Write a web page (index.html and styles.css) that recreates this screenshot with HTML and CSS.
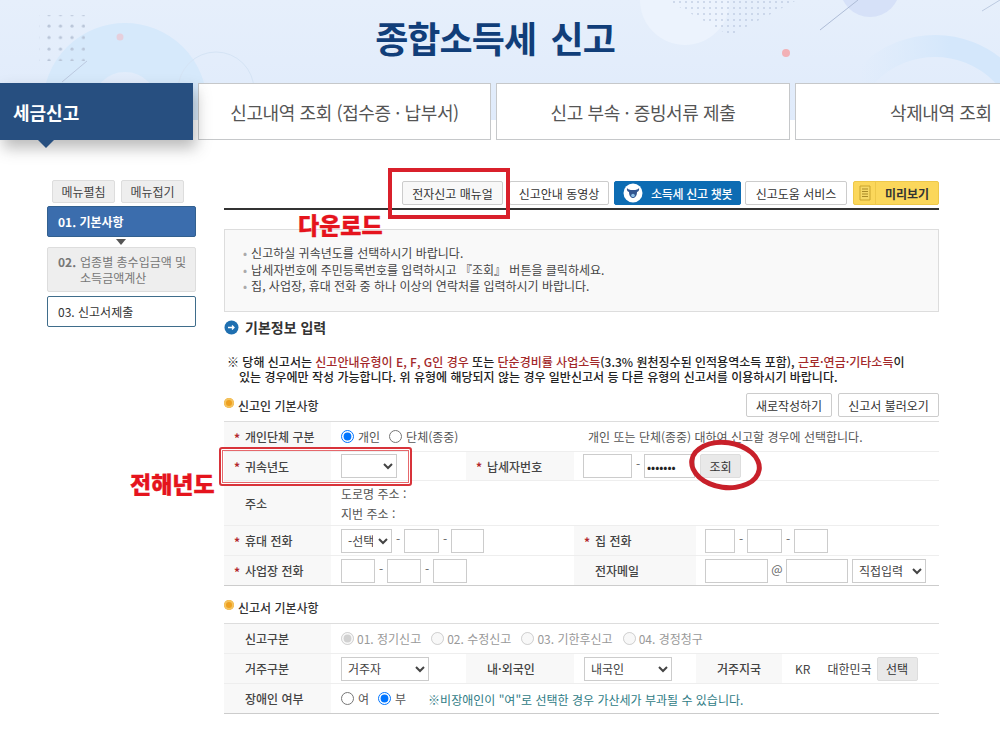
FILE: index.html
```html
<!DOCTYPE html>
<html lang="ko">
<head>
<meta charset="utf-8">
<title>종합소득세 신고</title>
<link rel="stylesheet" href="styles.css">
</head>
<body>
<div class="page">
  <header class="banner">
    <svg class="banner-art" width="1000" height="120" viewBox="0 0 1000 120" aria-hidden="true">
      <defs>
        <pattern id="dots" width="11.5" height="11.5" patternUnits="userSpaceOnUse"><circle cx="3" cy="3" r="1.6" fill="#b9c5d8"/></pattern>
        <pattern id="dots2" width="6" height="6" patternUnits="userSpaceOnUse"><circle cx="2" cy="2" r="0.8" fill="#a9b9d3"/></pattern>
        <linearGradient id="fade" gradientUnits="userSpaceOnUse" x1="860" y1="0" x2="950" y2="0"><stop offset="0" stop-color="#d8e9fb" stop-opacity="0"/><stop offset="1" stop-color="#d4e7fb"/></linearGradient>
      </defs>
      <circle cx="125" cy="105" r="57.500" fill="none" stroke="#d6e9fb" stroke-width="49"/>
      <circle cx="216" cy="90" r="38" fill="none" stroke="#d5e4f5" stroke-width="1"/>
      <rect x="39" y="15" width="46" height="46" fill="url(#dots)"/>
      <circle cx="120" cy="37" r="3.500" fill="#e6cfdc"/>
      <line x1="87" y1="61" x2="62" y2="82" stroke="#bcc9e0"/>
      <circle cx="685" cy="0" r="45" fill="#ecf3fd"/>
      <polygon points="667,0 797,0 735,33 725,33" fill="url(#dots2)"/>
      <circle cx="870" cy="-13" r="30" fill="#d6e1f8"/>
      <line x1="820" y1="30" x2="858" y2="0" stroke="#aebcd6"/>
      <line x1="982" y1="11" x2="1000" y2="0" stroke="#bccae0"/>
      <circle cx="786" cy="53" r="4" fill="#f2b1b6"/>
      <circle cx="935" cy="140" r="94" fill="none" stroke="url(#fade)" stroke-width="22"/>
    </svg>
    <h1 class="banner-title">종합소득세 신고</h1>
  </header>

  <nav class="tabs">
    <a class="tab tab-active">세금신고</a>
    <a class="tab tab-2">신고내역 조회 (접수증 · 납부서)</a>
    <a class="tab tab-3">신고 부속 · 증빙서류 제출</a>
    <a class="tab tab-4">삭제내역 조회</a>
  </nav>

  <div class="main">
    <aside class="side">
      <div class="side-btns">
        <button class="side-btn">메뉴펼침</button>
        <button class="side-btn">메뉴접기</button>
      </div>
      <div class="step step-on">01. 기본사항</div>
      <div class="step-arrow"></div>
      <div class="step step-off"><span class="step-no">02.</span><span>업종별 총수입금액 및<br>소득금액계산</span></div>
      <div class="step step-next">03. 신고서제출</div>
    </aside>

    <section class="content">
      <div class="toolbar">
        <button class="tool t-manual">전자신고 매뉴얼</button>
        <button class="tool t-video">신고안내 동영상</button>
        <button class="tool tool-chat">
          <svg width="20" height="20" viewBox="0 0 20 20" aria-hidden="true"><circle cx="10" cy="10" r="9.500" fill="#fff"/><path d="M4 5c1 1.500 2.500 2 6 2s5-.5 6-2c.5 2.200-.5 3.500-2 4 0 3.500-1.800 6-4 6s-4-2.500-4-6C4.500 8.500 3.500 7.200 4 5z" fill="#31548f"/><circle cx="10" cy="12.500" r="1.800" fill="#8fc1e8"/></svg>
          <span>소득세 신고 챗봇</span>
        </button>
        <button class="tool t-help">신고도움 서비스</button>
        <button class="tool tool-preview">
          <span class="preview-icon"><svg width="12" height="16" viewBox="0 0 12 16" aria-hidden="true"><path d="M1 1h10v14H1z" fill="#f6d867" stroke="#c9a42f"/><path d="M3 4h6M3 6.500h6M3 9h6M3 11.500h6" stroke="#a98a28"/></svg></span>
          <span class="preview-text">미리보기</span>
        </button>
      </div>

      <div class="notice">
        <p>신고하실 귀속년도를 선택하시기 바랍니다.</p>
        <p>납세자번호에 주민등록번호를 입력하시고 『조회』 버튼을 클릭하세요.</p>
        <p>집, 사업장, 휴대 전화 중 하나 이상의 연락처를 입력하시기 바랍니다.</p>
      </div>

      <h2 class="section-title">
        <svg width="15" height="15" viewBox="0 0 15 15" aria-hidden="true"><circle cx="7.500" cy="7.500" r="7" fill="#1f6fb0"/><path d="M4 7.500h6M8 5.500l2 2-2 2" stroke="#fff" stroke-width="1.300" fill="none"/></svg>
        기본정보 입력
      </h2>

      <p class="warn">※ 당해 신고서는 <em>신고안내유형이 E, F, G인 경우</em> 또는 <em>단순경비률 사업소득</em>(3.3% 원천징수된 인적용역소득 포함), <em>근로·연금·기타소득</em>이<br><span class="warn-indent">있는 경우에만 작성 가능합니다. 위 유형에 해당되지 않는 경우 일반신고서 등 다른 유형의 신고서를 이용하시기 바랍니다.</span></p>

      <div class="sub-head">
        <h3 class="sub-title"><i class="bullet"></i>신고인 기본사항</h3>
        <div class="sub-actions">
          <button class="action a-new">새로작성하기</button>
          <button class="action a-load">신고서 불러오기</button>
        </div>
      </div>

      <table class="form">
        <colgroup><col class="c1"><col class="c2"><col class="c3"><col class="c4"><col class="c5"><col class="c6"></colgroup>
        <tr class="r1">
          <th class="req">개인단체 구분</th>
          <td colspan="2"><label class="rad"><input type="radio" name="a" checked>개인</label><label class="rad"><input type="radio" name="a">단체(종중)</label></td>
          <td colspan="3" class="hint">개인 또는 단체(종중) 대하여 신고할 경우에 선택합니다.</td>
        </tr>
        <tr class="r2">
          <th class="req">귀속년도</th>
          <td><select class="sel w56"><option></option></select></td>
          <th class="req">납세자번호</th>
          <td colspan="2" class="tight"><input class="inp w49" type="text"><span class="dash">-</span><input class="inp w51 pw" type="text" value="•••••••"><button class="lookup">조회</button></td>
          <td></td>
        </tr>
        <tr class="r3">
          <th>주소</th>
          <td colspan="5" class="addr">도로명 주소 :<br>지번 주소 :</td>
        </tr>
        <tr class="r4">
          <th class="req">휴대 전화</th>
          <td colspan="2"><select class="sel w51"><option>-선택-</option></select><span class="dash">-</span><input class="inp w35" type="text"><span class="dash">-</span><input class="inp w33" type="text"></td>
          <th class="req">집 전화</th>
          <td colspan="2" class="tight"><input class="inp w30" type="text"><span class="dash">-</span><input class="inp w35" type="text"><span class="dash">-</span><input class="inp w34" type="text"></td>
        </tr>
        <tr class="r5">
          <th class="req">사업장 전화</th>
          <td colspan="2"><input class="inp w34" type="text"><span class="dash">-</span><input class="inp w34" type="text"><span class="dash">-</span><input class="inp w34" type="text"></td>
          <th>전자메일</th>
          <td colspan="2" class="tight"><input class="inp w63" type="text"><span class="at">@</span><input class="inp w62" type="text"><select class="sel w74"><option>직접입력</option></select></td>
        </tr>
      </table>

      <h3 class="sub-title sub-second"><i class="bullet"></i>신고서 기본사항</h3>

      <table class="form form-b">
        <colgroup><col class="c1"><col class="c2"><col class="c3"><col class="c4"><col class="c5"><col class="c6"></colgroup>
        <tr>
          <th>신고구분</th>
          <td colspan="5" class="muted"><label class="rad rad-d"><input type="radio" name="b" checked disabled>01. 정기신고</label><label class="rad rad-d"><input type="radio" name="b" disabled>02. 수정신고</label><label class="rad rad-d"><input type="radio" name="b" disabled>03. 기한후신고</label><label class="rad rad-d"><input type="radio" name="b" disabled>04. 경정청구</label></td>
        </tr>
        <tr>
          <th>거주구분</th>
          <td><select class="sel w88"><option>거주자</option></select></td>
          <th>내·외국인</th>
          <td><select class="sel w88"><option>내국인</option></select></td>
          <th>거주지국</th>
          <td class="country-cell"><div class="country"><span>KR</span><span>대한민국</span><button class="lookup pick">선택</button></div></td>
        </tr>
        <tr>
          <th>장애인 여부</th>
          <td colspan="5"><label class="rad"><input type="radio" name="c">여</label><label class="rad"><input type="radio" name="c" checked>부</label><span class="teal">※비장애인이 "여"로 선택한 경우 가산세가 부과될 수 있습니다.</span></td>
        </tr>
      </table>
    </section>
  </div>

  <div class="mark mark-manual"></div>
  <div class="callout callout-dl">다운로드</div>
  <div class="mark mark-year"></div>
  <div class="callout callout-year">전해년도</div>
  <div class="mark mark-lookup"></div>
</div>
</body>
</html>
```

FILE: styles.css
```css
* { box-sizing: border-box; }
html, body { margin: 0; background: #fff; }
body { font-family: "Noto Sans CJK KR", "Noto Sans", sans-serif; color: #333; font-size: 12px; overflow: hidden; }
.page { position: relative; width: 1000px; height: 730px; overflow: hidden; }
p, h1, h2, h3 { margin: 0; }
button { font-family: inherit; cursor: pointer; }

.banner { position: relative; height: 120px; margin-bottom: -37px; padding-top: 12px; background: linear-gradient(180deg, #e6effb, #e0ebfb); text-align: center; overflow: hidden; }
.banner-art { position: absolute; left: 0; top: 0; }
.banner-title { position: relative; width: 990px; font-size: 36px; line-height: 50px; font-weight: 700; color: #113e79; letter-spacing: -.9px; word-spacing: 5px; }

.tabs { position: relative; display: flex; height: 57px; }
.tab { flex: none; display: flex; align-items: center; justify-content: center; height: 57px; background: #fff; border: 1px solid #c6c8ca; font-size: 18px; letter-spacing: -.4px; color: #555; }
.tab-active { position: relative; width: 193px; margin-right: 5px; justify-content: flex-start; padding-left: 13px; background: #274f80; border: 0; color: #fff; font-weight: 700; letter-spacing: 0; box-shadow: 3px 8px 14px rgba(60, 60, 60, .35); }
.tab-active::after { content: ""; position: absolute; left: 37px; top: 56px; border: 9px solid transparent; border-top-color: #274f80; border-bottom: 0; }
.tab-2 { width: 293px; margin-right: 5px; }
.tab-3 { width: 294px; margin-right: 5px; }
.tab-4 { width: 220px; justify-content: flex-start; padding-left: 94px; }

.main { display: flex; gap: 28px; padding: 41px 0 0 47px; }
.side { width: 149px; flex: none; }
.side-btns { display: flex; gap: 6px; padding-left: 5px; margin: -1px 0 3px; }
.side-btn { width: 63px; height: 23px; padding: 0; background: #eee; border: 1px solid #ddd; border-radius: 2px; font-size: 12px; color: #444; }
.step { display: flex; align-items: center; width: 149px; padding-left: 10px; border-radius: 2px; font-size: 12px; }
.step-on { height: 31px; background: #3b6dad; border: 1px solid #32608f; color: #fff; font-weight: 700; }
.step-arrow { width: 0; margin: 2px 0 2px 69px; border: 5px solid transparent; border-top: 6px solid #555; border-bottom: 0; height: 6px; }
.step-off { gap: 4px; height: 45px; background: #eee; border: 1px solid #ddd; color: #777; line-height: 16px; }
.step-no { align-self: flex-start; padding-top: 6px; font-weight: 700; }
.step-next { height: 31px; margin-top: 4px; background: #fff; border: 1px solid #3f6d8b; color: #333; }

.content { width: 715px; flex: none; }
.toolbar { display: flex; justify-content: flex-end; gap: 5px; height: 29px; padding-bottom: 4px; border-bottom: 2px solid #333; }
.tool { flex: none; height: 24px; padding: 0; background: #fff; border: 1px solid #ccc; border-radius: 2px; font-size: 12px; color: #333; display: flex; align-items: center; justify-content: center; white-space: nowrap; }
.t-manual { width: 101px; background: #f8f8f8; }
.t-video { width: 100px; margin-left: 1px; }
.t-help { width: 102px; margin-right: 1px; }
.tool-chat { width: 127px; gap: 8px; margin-right: -1px; justify-content: flex-start; padding-left: 8px; background: #0d6cb3; border-color: #0d6cb3; color: #fff; font-weight: 500; letter-spacing: -.3px; }
.tool-preview { width: 86px; background: #fbd75b; border-color: #eec84a; font-weight: 700; }
.preview-icon { display: flex; align-items: center; justify-content: center; width: 22px; height: 22px; border-right: 1px solid #eec84a; }
.preview-text { flex: 1; text-align: center; }

.notice { height: 83px; margin-top: 19px; padding: 15px 0 0 18px; background: #f9f9f9; border: 1px solid #ddd; font-size: 12px; line-height: 16.500px; color: #444; }
.notice p::before { content: "•"; color: #aaa; margin-right: 4px; }

.section-title { display: flex; align-items: center; gap: 6px; height: 20px; margin-top: 5px; font-size: 14px; font-weight: 700; color: #333; }
.warn { margin-top: 17px; padding-left: 3px; font-size: 12px; line-height: 15px; font-weight: 500; color: #222; white-space: nowrap; }
.warn em { font-style: normal; color: #a3282a; }
.warn-indent { padding-left: 12px; }

.sub-head { display: flex; align-items: center; justify-content: space-between; height: 24px; margin-top: 9px; }
.sub-title { display: flex; align-items: center; gap: 4px; font-size: 12px; font-weight: 500; color: #333; }
.bullet { width: 10px; height: 10px; border-radius: 50%; background: #eea020; box-shadow: inset 0 0 0 2px #f4c35e; margin-top: -4px; }
.sub-actions { display: flex; gap: 6px; }
.action { height: 24px; padding: 0; background: #fff; border: 1px solid #ccc; border-radius: 2px; font-size: 12px; color: #333; }
.a-new { width: 86px; }
.a-load { width: 101px; }

.form { width: 715px; margin-top: 4px; border-collapse: collapse; table-layout: fixed; border-top: 1px solid #ddd; border-bottom: 1px solid #ccc; }
.c1 { width: 107px; } .c2 { width: 135px; } .c3 { width: 108px; } .c4 { width: 122px; } .c5 { width: 86px; } .c6 { width: 157px; }
.form tr { height: 30px; border-bottom: 1px solid #eee; }
.form tr:last-child { border-bottom: 0; }
.form tr.r2 { height: 29px; }
.form tr.r3 { height: 45px; }
.form th, .form td { padding: 0; font-size: 12px; color: #444; vertical-align: middle; }
.form th { position: relative; background: #f8f8f8; font-weight: 500; text-align: left; padding-left: 21px; }
.form td { padding-left: 10px; white-space: nowrap; }
.form td.tight { padding-left: 9px; }
.req::before { content: "*"; position: absolute; left: 10px; top: 50%; margin-top: -8px; color: #b3272c; font-weight: 700; }
.form td.hint { color: #555; padding-left: 14px; }
.form td.addr { padding-top: 2px; line-height: 20px; color: #555; }
.rad { display: inline-flex; align-items: center; gap: 4px; margin-right: 9px; color: #555; }
.rad input { width: 13px; height: 13px; margin: 0; }
.rad-d { gap: 3px; color: #999; margin-right: 10px; }
.sel, .inp { height: 24px; padding: 0 2px; background: #fff; border: 1px solid #ccc; font-family: inherit; font-size: 12px; color: #444; vertical-align: middle; border-radius: 0; }
.w56 { width: 56px; } .w51 { width: 51px; } .w49 { width: 49px; } .w35 { width: 35px; } .w34 { width: 34px; } .w33 { width: 33px; } .w30 { width: 30px; } .w63 { width: 63px; } .w62 { width: 62px; } .w74 { width: 74px; margin-left: 4px; } .w88 { width: 88px; }
.pw { color: #222; }
.dash { display: inline-block; width: 12px; text-align: center; color: #666; }
.at { display: inline-block; width: 18px; text-align: center; color: #666; }
.lookup { width: 41px; height: 24px; margin-left: 5px; padding: 0; background: #e9e9e9; border: 1px solid #ddd; border-radius: 2px; font-size: 12px; color: #333; vertical-align: middle; }
.form td.country-cell { padding-left: 13px; }
.country { display: flex; align-items: center; gap: 17px; }
.pick { margin-left: -12px; }
.teal { margin-left: 13px; color: #2f7c85; }

.sub-second { height: 20px; margin-top: 11px; }
.form-b { margin-top: 6px; }

.mark { position: absolute; pointer-events: none; }
.mark-manual { left: 388px; top: 168px; width: 122px; height: 51px; border: 4px solid #d9202b; }
.mark-year { left: 219px; top: 447px; width: 193px; height: 39px; border: 2px solid #d8333a; border-radius: 3px; box-shadow: inset 0 0 0 1px #fff, inset 0 0 0 2px #e6686c; }
.mark-lookup { left: 689px; top: 440px; width: 73px; height: 50px; border: 5px solid #c8202a; border-radius: 50%; transform: rotate(8deg); }
.callout { position: absolute; font-size: 23px; line-height: 26px; font-weight: 900; color: #e5141d; -webkit-text-stroke: .3px #e5141d; }
.callout-dl { left: 298px; top: 211px; }
.callout-year { left: 130px; top: 470px; }
```
